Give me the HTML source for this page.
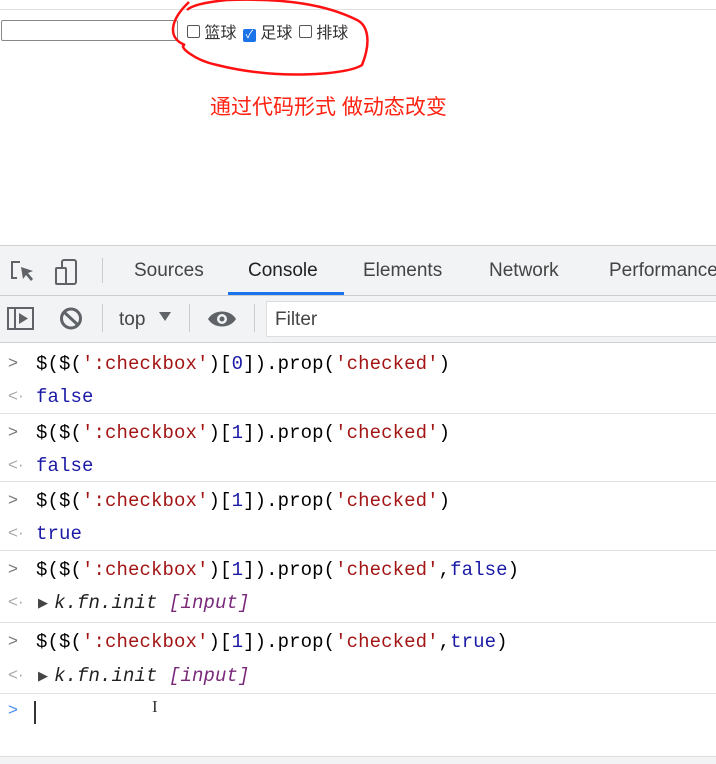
<!DOCTYPE html>
<html><head><meta charset="utf-8"><style>
body{margin:0;width:716px;height:763px;overflow:hidden;background:#fff;font-family:"Liberation Sans","Noto Sans CJK SC",sans-serif;position:relative}
.a{position:absolute}
.mono{font-family:"Liberation Mono",monospace;font-size:19px;white-space:pre;letter-spacing:0.1px}
.row{position:absolute;left:0;width:716px}
.sep{position:absolute;left:0;width:716px;height:1px;background:#e3e3e3}
.s{color:#a31515}.n{color:#1a1aa6}.k{color:#1a1aa6}
.pr{position:absolute;left:8px;color:#777;font-family:"Liberation Sans",sans-serif;font-size:17px}
.cb{display:inline-block;width:11px;height:11px;border:1px solid #555;border-radius:2px;vertical-align:0px}
</style></head><body>
<div class="a" style="left:0;top:9px;width:716px;height:1px;background:#e0e0e0"></div>
<div class="a" style="left:1px;top:20px;width:175px;height:19px;border:1px solid #888;border-radius:2px"></div>
<div class="a" style="left:187px;top:19px;font-size:16px;color:#333;white-space:nowrap">
<span class="cb"></span>&nbsp;篮球 <span style="display:inline-block;width:13px;height:13px;background:#1a73e8;border-radius:2px;vertical-align:0px;color:#fff;font-size:11px;text-align:center;line-height:13px;margin-left:2px">✓</span> 足球 <span class="cb" style="margin-left:2px"></span>&nbsp;排球</div>
<svg class="a" style="left:165px;top:0" width="215" height="80"><path d="M24 2 C5 20 2 38 20 45 C12 45 28 60 52 65 C112 80 182 75 197 65 C207 40 202 25 192 20 C162 5 122 -2 62 0 C42 2 27 5 22 10" fill="none" stroke="#f11" stroke-width="2.5"/></svg>
<div class="a" style="left:210px;top:91px;font-size:21px;color:#f21;white-space:nowrap">通过代码形式 做动态改变</div>

<div class="a" style="left:0;top:245px;width:716px;height:49px;background:#f1f3f4;border-top:1px solid #d0d0d0;border-bottom:1px solid #cbcdd1"></div>
<svg class="a" style="left:10px;top:258px" width="75" height="28"><path d="M10 4H2V20H7" fill="none" stroke="#5f6368" stroke-width="2"/><path d="M11 9L23 13L18 15L23 21L21 23L16 17L13 21Z" fill="#5f6368"/><rect x="52" y="2" width="14" height="24" rx="2" fill="none" stroke="#5f6368" stroke-width="2"/><rect x="46" y="10" width="10" height="16" rx="1" fill="#f1f3f4" stroke="#5f6368" stroke-width="2"/></svg>
<div class="a" style="left:102px;top:258px;width:1px;height:25px;background:#ccc"></div>
<div class="a" style="left:0;top:260px;font-size:19px;color:#444;white-space:nowrap">
<span class="a" style="left:134px">Sources</span><span class="a" style="left:248px;color:#202124">Console</span><span class="a" style="left:363px">Elements</span><span class="a" style="left:489px">Network</span><span class="a" style="left:609px">Performance</span></div>
<div class="a" style="left:228px;top:292px;width:116px;height:3px;background:#1a73e8"></div>
<div class="a" style="left:0;top:296px;width:716px;height:46px;background:#f1f3f4;border-bottom:1px solid #d0d0d0"></div>
<svg class="a" style="left:7px;top:306px" width="240" height="26"><rect x="1" y="2" width="25" height="21" fill="none" stroke="#5f6368" stroke-width="2"/><path d="M8 2V23" stroke="#5f6368" stroke-width="2"/><path d="M12 7L21 12.5L12 18Z" fill="#5f6368"/><circle cx="64" cy="12.5" r="9.5" fill="none" stroke="#5f6368" stroke-width="3"/><path d="M57 6L71 19" stroke="#5f6368" stroke-width="3"/><path d="M152 6H164L158 15Z" fill="#5f6368"/><path d="M201 13C207 3 223 3 229 13C223 23 207 23 201 13Z" fill="#5f6368"/><circle cx="215" cy="13" r="5" fill="#f1f3f4"/><circle cx="215" cy="13" r="2.5" fill="#5f6368"/></svg>
<div class="a" style="left:102px;top:304px;width:1px;height:28px;background:#ccc"></div>
<div class="a" style="left:189px;top:304px;width:1px;height:28px;background:#ccc"></div>
<div class="a" style="left:254px;top:304px;width:1px;height:28px;background:#ccc"></div>
<div class="a" style="left:119px;top:309px;font-size:19px;color:#444">top</div>
<div class="a" style="left:266px;top:301px;width:460px;height:34px;background:#fff;border:1px solid #ddd"></div>
<div class="a" style="left:275px;top:309px;font-size:19px;color:#444">Filter</div>

<div class="row mono" style="top:353px"><span class="pr">&gt;</span><span class="a" style="left:36px">$($(<span class="s">':checkbox'</span>)[<span class="n">0</span>]).prop(<span class="s">'checked'</span>)</span></div>
<div class="row mono" style="top:386px"><span class="pr" style="color:#aaa">&lt;·</span><span class="a k" style="left:36px">false</span></div>
<div class="sep" style="top:413px"></div>
<div class="row mono" style="top:422px"><span class="pr">&gt;</span><span class="a" style="left:36px">$($(<span class="s">':checkbox'</span>)[<span class="n">1</span>]).prop(<span class="s">'checked'</span>)</span></div>
<div class="row mono" style="top:455px"><span class="pr" style="color:#aaa">&lt;·</span><span class="a k" style="left:36px">false</span></div>
<div class="sep" style="top:481px"></div>
<div class="row mono" style="top:490px"><span class="pr">&gt;</span><span class="a" style="left:36px">$($(<span class="s">':checkbox'</span>)[<span class="n">1</span>]).prop(<span class="s">'checked'</span>)</span></div>
<div class="row mono" style="top:523px"><span class="pr" style="color:#aaa">&lt;·</span><span class="a k" style="left:36px">true</span></div>
<div class="sep" style="top:550px"></div>
<div class="row mono" style="top:559px"><span class="pr">&gt;</span><span class="a" style="left:36px">$($(<span class="s">':checkbox'</span>)[<span class="n">1</span>]).prop(<span class="s">'checked'</span>,<span class="k">false</span>)</span></div>
<div class="row mono" style="top:592px"><span class="pr" style="color:#aaa">&lt;·</span><span class="a" style="left:38px;font-size:13px;top:4px;color:#444">▶</span><span class="a" style="left:54px;font-style:italic;color:#222">k.fn.init <span style="color:#7a2a7a">[input]</span></span></div>
<div class="sep" style="top:622px"></div>
<div class="row mono" style="top:631px"><span class="pr">&gt;</span><span class="a" style="left:36px">$($(<span class="s">':checkbox'</span>)[<span class="n">1</span>]).prop(<span class="s">'checked'</span>,<span class="k">true</span>)</span></div>
<div class="row mono" style="top:665px"><span class="pr" style="color:#aaa">&lt;·</span><span class="a" style="left:38px;font-size:13px;top:4px;color:#444">▶</span><span class="a" style="left:54px;font-style:italic;color:#222">k.fn.init <span style="color:#7a2a7a">[input]</span></span></div>
<div class="sep" style="top:693px"></div>
<div class="row mono" style="top:700px"><span class="pr" style="color:#4a8cf0">&gt;</span></div>
<div class="a" style="left:34px;top:701px;width:2px;height:23px;background:#333"></div>
<div class="a" style="left:152px;top:697px;font-size:17px;color:#333;font-family:'Liberation Serif',serif">I</div>
<div class="a" style="left:0;top:756px;width:716px;height:7px;background:#f1f3f4;border-top:1px solid #ddd"></div>
</body></html>
